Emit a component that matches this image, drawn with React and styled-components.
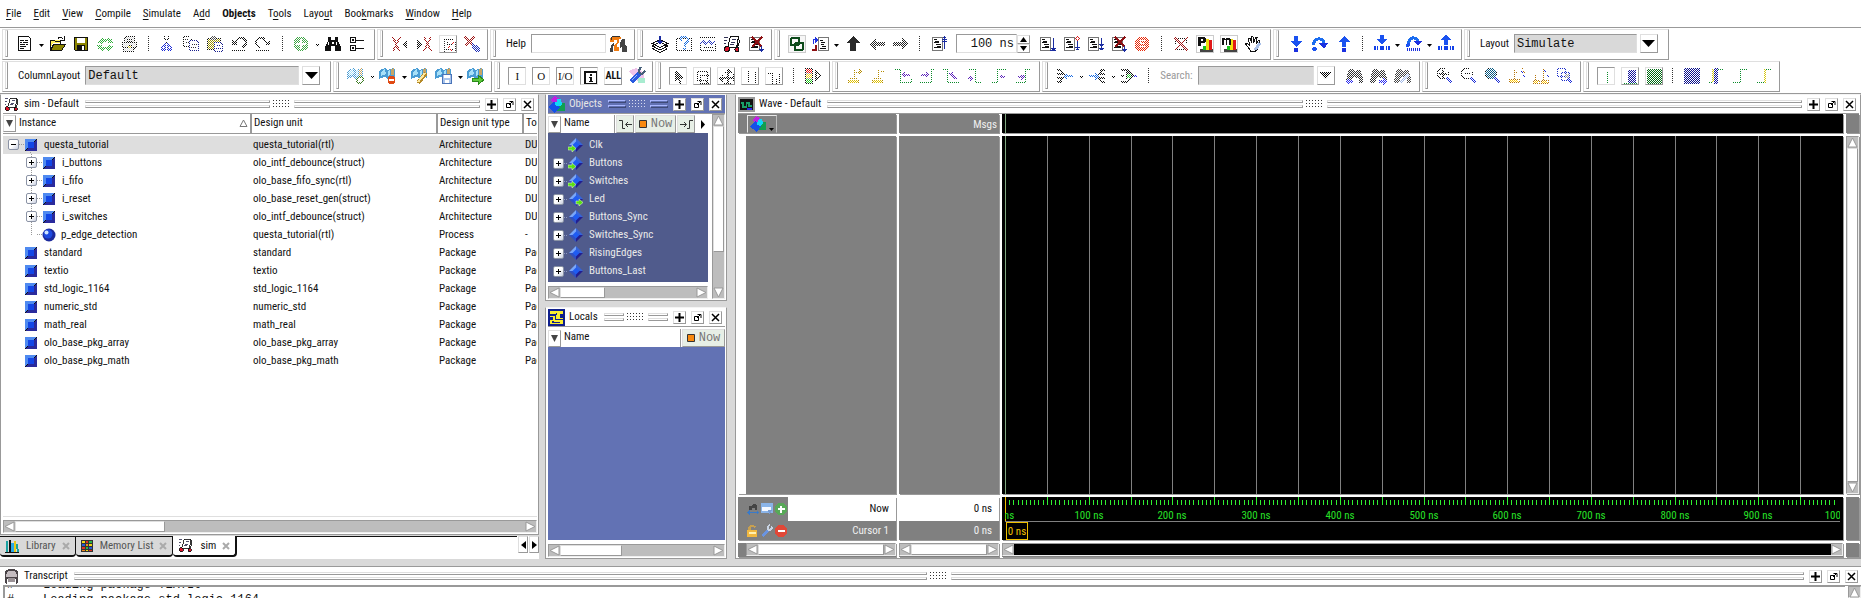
import React from "react";
import styled, { createGlobalStyle, css } from "styled-components";

const UI = `"Roboto Condensed", "Liberation Sans Narrow", "Liberation Sans", Arial, sans-serif`;
const MONO = `"Liberation Mono", "Courier New", monospace`;
const LIGHT = "#dfdfdf";
const DARK = "#999";
const FACE = "#d9d9d9";

const raised = css`
  border: 1px solid;
  border-color: ${LIGHT} ${DARK} ${DARK} ${LIGHT};
`;
const sunken = css`
  border: 1px solid;
  border-color: ${DARK} ${LIGHT} ${LIGHT} ${DARK};
`;
const dither = css`
  mask: conic-gradient(#000 25%, transparent 0 50%, #000 0 75%, transparent 0) 0 0 / 2px 2px;
`;

const Global = createGlobalStyle`
  *, *::before, *::after { box-sizing: border-box; }
  body { margin: 0; background: ${FACE}; }
  body, button, input, select, table {
    font-family: ${UI};
    font-size: 11px;
    line-height: 16px;
    color: #111;
  }
  button { padding: 0; margin: 0; background: none; border: 0; }
  svg { display: block; flex: none; }
`;

/* ---------- page frame ---------- */

const Page = styled.div`
  display: flex;
  flex-direction: column;
  height: 100vh;
  overflow: hidden;
  white-space: nowrap;
`;
const MenuBar = styled.nav`
  display: flex;
  align-items: center;
  height: 27px;
  background: #fff;
`;
const MenuItem = styled.button`
  padding: 0 6px;
  font-weight: ${(p) => (p.$active ? "bold" : "normal")};
  u { text-underline-offset: 2px; }
`;
const ToolArea = styled.div`
  display: flex;
  flex-direction: column;
  gap: 1px;
  padding: 1px 2px;
  background: #fff;
  border-top: 1px solid ${DARK};
  border-bottom: 1px solid ${DARK};
`;
const ToolRow = styled.div`
  display: flex;
  gap: 2px;
`;
const ToolGroup = styled.div`
  display: flex;
  align-items: center;
  height: 31px;
  padding: 0 ${(p) => p.$end ?? 3}px 2px 2px;
  ${raised}
`;
const Grip = styled.span`
  width: 3px;
  height: 27px;
  margin-right: 5px;
  ${raised}
`;
const ToolButton = styled.button`
  display: grid;
  place-items: center;
  width: 24px;
  height: 24px;
  flex: none;
  svg { ${(p) => p.$off && dither} }
`;
const BoxButton = styled(ToolButton)`
  width: 18px;
  height: 18px;
  margin: 0 3px;
  overflow: hidden;
  ${(p) => (p.$in ? sunken : raised)}
`;
const SerifGlyph = styled.span`
  font-family: "Liberation Serif", serif;
  font-size: 11px;
`;
const BoldGlyph = styled.span`
  font-weight: bold;
  font-size: 10px;
`;
const Drop = styled.button`
  display: grid;
  place-items: center;
  width: 8px;
  height: 24px;
  padding-top: 4px;
  svg { ${(p) => p.$off && dither} }
`;
const Split = styled.span`
  width: 14px;
  height: 16px;
  background: repeating-linear-gradient(#333 0 1px, transparent 1px 2px) center / 1px 100% no-repeat;
`;
const ToolLabel = styled.label`
  display: flex;
  align-items: center;
  gap: 5px;
  padding-left: 5px;
  color: ${(p) => (p.$off ? "#999" : "#111")};
`;
const Field = styled.input`
  width: ${(p) => p.$w}px;
  height: 19px;
  padding: 0 2px;
  background: ${(p) => (p.$fill ? FACE : "#fff")};
  border-radius: 0;
  outline: 0;
  font-family: ${MONO};
  font-size: 12px;
  text-align: ${(p) => (p.$right ? "right" : "left")};
  ${sunken}
`;
const Choice = styled.select`
  appearance: none;
  width: ${(p) => p.$w}px;
  height: 19px;
  padding: 0 2px;
  background: ${FACE};
  border-radius: 0;
  font-family: ${MONO};
  font-size: 12px;
  ${sunken}
`;
const ChoiceButton = styled.button`
  display: grid;
  place-items: center;
  width: 18px;
  height: 19px;
  margin: 0 7px 0 3px;
  ${raised}
  svg { ${(p) => p.$off && dither} }
`;
const Spin = styled.span`
  display: flex;
  flex-direction: column;
  width: 13px;
  margin-right: 5px;
  button {
    display: grid;
    place-items: center;
    height: 9px;
    ${raised}
  }
`;

/* ---------- panels ---------- */

const Main = styled.main`
  display: flex;
  flex: 1;
  min-height: 0;
  padding-bottom: 7px;
`;
const LeftColumn = styled.div`
  display: flex;
  flex-direction: column;
  width: 539px;
  margin-right: 6px;
`;
const MiddleColumn = styled.div`
  display: flex;
  flex-direction: column;
  gap: 6px;
  width: 182px;
  margin-right: 8px;
`;
const Panel = styled.section`
  display: flex;
  flex-direction: column;
  flex: ${(p) => p.$flex ?? "1"};
  min-width: 0;
  min-height: 0;
  padding: 0 1px 1px 2px;
  background: #fff;
  border: 1px solid ${DARK};
  border-top-color: #f4f4f4;
`;
const TitleBar = styled.header`
  display: flex;
  align-items: center;
  height: 19px;
  flex: none;
  padding-right: 3px;
  background: ${(p) => (p.$active ? "#6272b4" : "#fff")};
  color: ${(p) => (p.$active ? "#e6e6e6" : "#111")};
  border-bottom: 1px solid ${DARK};
`;
const TitleText = styled.h2`
  margin: 0 6px 0 4px;
  font-size: 11px;
  font-weight: normal;
`;
const Rails = styled.span`
  flex: 1;
  height: 8px;
  display: flex;
  flex-direction: column;
  gap: 2px;
  &::before, &::after {
    content: "";
    height: 3px;
    border: 1px solid;
    border-color: ${(p) => (p.$active ? "#a9b6ff" : LIGHT)} ${(p) => (p.$active ? "#3f4a78" : DARK)}
      ${(p) => (p.$active ? "#3f4a78" : DARK)} ${(p) => (p.$active ? "#a9b6ff" : LIGHT)};
  }
`;
const Dots = styled.span`
  width: 18px;
  height: 8px;
  margin: 0 3px;
  background: ${(p) => (p.$active ? "#d8dcf0" : "#333")};
  mask: conic-gradient(from 270deg at 1px 1px, #000 90deg, transparent 0) 0 0 / 3px 3px;
`;
const TitleButton = styled.button`
  display: grid;
  place-items: center;
  width: 13px;
  height: 13px;
  margin-left: 5px;
  background: #fff;
  ${raised}
`;

/* ---------- scroll bars ---------- */

const Track = styled.div`
  display: flex;
  flex-direction: ${(p) => (p.$vertical ? "column" : "row")};
  flex: none;
  ${(p) => (p.$vertical ? "width: 13px;" : "height: 13px;")}
  background: #bdbdbd;
  border: 1px solid;
  border-color: ${DARK} #eee #eee ${DARK};
`;
const Thumb = styled.span`
  flex: ${(p) => (p.$size ? `0 0 ${p.$size}px` : "1")};
  background: ${(p) => (p.$dark ? "#000" : "#fff")};
  ${(p) => !p.$dark && raised}
`;
const Fill = styled.span`
  flex: 1;
`;

const arrows = {
  left: "M10 1V10L1 5.5z",
  right: "M1 1V10L10 5.5z",
  up: "M1 10H10L5.5 1z",
  down: "M1 1H10L5.5 10z",
};
function ScrollArrow({ dir }) {
  return (
    <svg width="11" height="11" viewBox="0 0 11 11">
      <path d={arrows[dir]} fill="#fff" stroke="#999" />
    </svg>
  );
}
function ScrollBar({ vertical, thumb, dark }) {
  return (
    <Track $vertical={vertical}>
      <ScrollArrow dir={vertical ? "up" : "left"} />
      <Thumb $size={thumb} $dark={dark} />
      {thumb && <Fill />}
      <ScrollArrow dir={vertical ? "down" : "right"} />
    </Track>
  );
}

/* ---------- lists ---------- */

const ListFrame = styled.div`
  flex: 1;
  min-height: 0;
  overflow: hidden;
  margin-bottom: 3px;
  border-bottom: 1px solid ${LIGHT};
`;
const TreeTable = styled.table`
  table-layout: fixed;
  width: 100%;
  border-collapse: collapse;
  th {
    height: 19px;
    padding: 0 0 0 2px;
    font-weight: normal;
    text-align: left;
    overflow: hidden;
    border-right: 2px solid ${DARK};
    border-bottom: 1px solid ${DARK};
  }
  th:first-child { padding: 0; }
  th:last-child { border-right: 0; }
  td {
    height: 18px;
    padding: 0 0 0 2px;
    overflow: hidden;
  }
  td:first-child { padding: 0; }
  tbody::before { content: ""; display: block; height: 2px; }
`;
const TreeRow = styled.tr`
  background: ${(p) => (p.$selected ? "#dedede" : "transparent")};
`;
const HeadCell = styled.div`
  display: flex;
  align-items: center;
  justify-content: space-between;
  gap: 3px;
  padding-right: 2px;
`;
const HeadName = styled.span`
  flex: 1;
`;
const MarkButton = styled.button`
  display: grid;
  place-items: center;
  width: 13px;
  height: 17px;
  background: #fff;
  ${raised}
`;
const NodeLine = styled.div`
  display: flex;
  align-items: center;
  height: 18px;
  padding-left: ${(p) => p.$pad}px;
`;
const NodeName = styled.span`
  margin-left: ${(p) => p.$gap ?? 7}px;
`;
const vline = (h, y) => css`
  background: repeating-linear-gradient(#999 0 1px, transparent 1px 2px) 5px ${y} / 1px ${h} no-repeat;
`;
const Slot = styled.span`
  display: flex;
  align-items: center;
  width: 11px;
  height: 18px;
  ${(p) => p.$line === "full" && vline("18px", "0")}
  ${(p) => p.$line === "half" && vline("9px", "0")}
`;
const Link = styled.span`
  width: ${(p) => p.$w ?? 6}px;
  height: 1px;
  background: repeating-linear-gradient(90deg, ${(p) => p.$c ?? "#999"} 0 1px, transparent 1px 2px);
`;
const NodeIcon = styled.span`
  display: flex;
  align-items: center;
  height: 18px;
  ${(p) => p.$tail && vline("4px", "14px")}
`;
const Expander = styled.button`
  display: grid;
  place-items: center;
  width: 11px;
  height: 11px;
  border: 1px solid #8b93a5;
  border-radius: 2px;
  background: linear-gradient(135deg, #fff 50%, #c9cfe0);
`;

const ObjectsBody = styled.div`
  display: flex;
  flex: 1;
  min-height: 0;
  gap: 4px;
`;
const ObjectsList = styled.div`
  display: flex;
  flex-direction: column;
  flex: 1;
  min-width: 0;
`;
const ListHead = styled.div`
  display: flex;
  align-items: center;
  height: 19px;
  padding-top: ${(p) => p.$drop ?? 1}px;
  box-sizing: content-box;
  height: 18px;
  gap: 1px;
  background: #fff;
`;
const NameHead = styled.span`
  flex: 1;
  padding-left: 2px;
  border-right: 1px solid ${DARK};
  height: 18px;
`;
const NowHead = styled.button`
  display: flex;
  align-items: center;
  justify-content: center;
  gap: 4px;
  height: 18px;
  width: ${(p) => p.$w ?? 18}px;
  background: #e7efe6;
  color: #777;
  font-family: ${MONO};
  font-size: 12px;
  ${raised}
`;
const Signals = styled.ul`
  flex: 1;
  margin: 0 0 4px;
  padding: 3px 0 0 5px;
  list-style: none;
  overflow: hidden;
  background: ${(p) => (p.$plain ? "#6272b4" : "#505b8c")};
  color: #e9e9e9;
`;
const Signal = styled.li`
  display: flex;
  align-items: center;
  height: 18px;
`;

/* ---------- tabs ---------- */

const TabStrip = styled.div`
  display: flex;
  height: 23px;
  margin-top: 1px;
  background: #fff;
`;
const Tab = styled.button`
  display: flex;
  align-items: center;
  gap: 6px;
  height: 21px;
  padding: 0 5px 0 4px;
  background: ${(p) => (p.$on ? "#fff" : FACE)};
  color: ${(p) => (p.$on ? "#111" : "#555")};
  border: solid #111;
  border-width: ${(p) => (p.$on ? "0 2px 2px 0" : "1px 1px 2px 0")};
  border-radius: 0 0 4px 4px;
`;
const TabRest = styled.span`
  flex: 1;
  border-top: 1px solid #111;
`;
const TabStep = styled.button`
  display: grid;
  place-items: center;
  width: 10px;
  height: 17px;
  margin-left: 1px;
  ${raised}
`;

/* ---------- wave window ---------- */

const WaveGrid = styled.div`
  display: grid;
  flex: 1;
  min-height: 0;
  grid-template-columns: 158px 100px minmax(0, 1fr) 13px;
  grid-template-rows: 19px minmax(0, 1fr) 43px 14px;
  gap: 3px;
  & > * { box-shadow: 1px 1px 0 ${DARK}; min-width: 0; }
`;
const Gray = styled.div`
  display: flex;
  justify-content: ${(p) => (p.$end ? "flex-end" : "flex-start")};
  align-items: flex-end;
  padding: 0 2px 0 0;
  background: #808080;
  color: #f0f0f0;
`;
const NameArea = styled(Gray)`
  border-left: 8px solid #fff;
`;
const WaveMenu = styled.button`
  display: flex;
  align-items: flex-end;
  gap: 3px;
  width: 30px;
  height: 18px;
  padding-left: 2px;
  margin-left: 9px;
  border: 1px solid;
  border-color: #e8e8e8 #bbb #808080 #e8e8e8;
`;
const WaveMenuArrow = styled.span`
  padding-bottom: 1px;
`;
const Black = styled.div`
  background: #000;
  overflow: hidden;
  svg { width: 100%; height: 100%; }
`;
const Stack = styled.div`
  display: grid;
  grid-template-rows: 24px 19px;
  background: #808080;
`;
const Reading = styled.div`
  display: flex;
  align-items: center;
  background: ${(p) => (p.$now ? "#fff" : "#808080")};
  color: ${(p) => (p.$now ? "#111" : "#f0f0f0")};
`;
const ReadingIcons = styled.span`
  display: flex;
  align-items: center;
  align-self: stretch;
  width: 50px;
  padding-left: 8px;
  background: #808080;
`;
const ReadingText = styled.span`
  flex: 1;
  padding-right: 7px;
  text-align: right;
`;
const ScrollCell = styled.div`
  display: flex;
  padding-left: ${(p) => p.$indent ?? 0}px;
  background: #808080;
  & > * { flex: 1; }
`;

/* ---------- transcript ---------- */

const Transcript = styled.section`
  display: flex;
  flex-direction: column;
  height: 32px;
  flex: none;
  padding-left: 3px;
  background: #fff;
  border-top: 1px solid ${DARK};
`;
const TranscriptBody = styled.div`
  display: flex;
  flex: 1;
  min-height: 0;
  gap: 3px;
`;
const Log = styled.pre`
  display: flex;
  flex-direction: column;
  justify-content: flex-start;
  flex: 1;
  margin: 0;
  padding-left: 2px;
  overflow: hidden;
  border: solid ${DARK};
  border-width: 1px 0 0 2px;
  font-family: ${MONO};
  font-size: 12px;
  line-height: 15px;
  div { margin-top: -9px; }
`;

/* ---------- drawings ---------- */

const L = (d, s = "#111", f = "none", w = 1) => <path d={d} stroke={s} fill={f} strokeWidth={w} />;
const F = (d, f = "#111") => <path d={d} fill={f} />;

const page = (
  <>
    {L("M3.5 3.5H13.5V16.5H3.5z", "#777", "#fff")}
    {F("M5 5h3v1H5zM5 8h5v1H5zM7 10h5v1H7zM6 7h4v1H6zM5 13h7v1H5zM8 12h4v1H8z")}
  </>
);
const bars = <>{F("M2 12h2v4H2zM5 12h1v4H5zM8 12h4v4H8zM14 12h1v4h-1zM16 12h2v4h-2z", "#1240e8")}</>;
const flag = (
  <>
    {F("M1 5L4 3L7 2L9 4L12 3L16 2L17 4V12L14 11L10 13L7 11L3 12L1 13z", "#4a9cd4")}
    {F("M3 6L7 3L8 8L3 10zM10 5L12 4V9L10 10z", "#a8e0f8")}
    {F("M13 3L16 2V9H13z", "#c7a565")}
  </>
);
const sigTools = (d, arrow) => (
  <>
    {L(d, "#0a8a2a")}
    {F(arrow, "#5a22b8")}
  </>
);
const lens = (
  <>
    <circle cx="8" cy="7.5" r="5.5" fill="none" stroke="#111" />
    {L("M12 12L17 17", "#1a2cd8", "none", 2)}
  </>
);
const binocular = (c) => F("M5 3h4l2 3l3-2h2l3 8v5h-4v-5h-2l-3-2l-3 7H2l1-9z", c);

const art = {
  doc: <>{L("M3.500 2.500H13.500L15.500 4.500V16.500H3.500z", "#111", "#fff")}{F("M5 6h4v1H5zM10 6h3v1h-3zM5 8h2v1H5zM8 8h5v1H8zM5 10h5v1H5zM11 10h2v1h-2zM5 12h6v1H5zM5 14h4v1H5zM15 5h1v12h-1z")}</>,
  open: <>{F("M3 7h4l1-1h6v3H6L3 15z", "#ffef5a")}{L("M3.500 16.500V6.500H7.500L8.500 7.500H13.500V10", "#111")}{L("M3.500 16.500L6.500 10.500H18.500L14.500 16.500z", "#111", "#8b8400")}{L("M11 4.500Q14 1.500 16.500 5.500M17 2v4h-4", "#111")}</>,
  save: <>{L("M3.500 3.500H16.500V16.500H4.500L3.500 15.500z", "#111", "#8b8400")}{F("M6 4h8v5H6z", "#fff")}{F("M6 11h8v6H6z")}{F("M11 12h2v4h-2z", "#fff")}</>,
  refresh: F("M2 8L7 3L9 5L14 4L16 6V3L18 9L12 9L13 7L9 8L7 10zM18 12L13 17L11 15L7 17L4 15V18L2 11H8L7 13L11 13L13 11z", "#2fae3a"),
  print: <>{L("M5.500 8V3.500L8.500 2.500H15.500V8M3.500 8.500H17.500V13.500H3.500zM5 13.500L4 17.500H14L16 13.500", "#111", "#ddd")}{F("M7 5h6v1H7zM7 7h7v1H7zM10 11h4v1h-4z")}{F("M9 12h3v2H9z", "#d8c820")}</>,
  cut: <>{L("M7 2L11 12M12 2L8 12", "#111")}{L("M8 11L5 13V16H8zM11 11L14 13V16H11z", "#1c2bd6", "none", 2)}</>,
  copy: <>{L("M2.500 2.500H8.500L10.500 4.500V12.500H2.500z", "#111", "#fff")}{L("M8.500 6.500H15.500L17.500 8.500V16.500H8.500z", "#1a1f8c", "#fff")}{F("M4 5h4v1H4zM4 8h4v1H4zM10 10h6v1h-6zM10 13h6v1h-6z", "#333")}</>,
  paste: <>{L("M2.500 4.500H15.500V15.500H2.500z", "#111", "#9a9300")}{F("M6 2h5v4H6z", "#555")}{L("M9.500 8.500H15.500L17.500 10.500V17.500H9.500z", "#1a1f8c", "#fff")}{F("M11 11h5v1h-5zM11 14h5v1h-5z", "#1a1f8c")}</>,
  undo: <>{L("M6 9L10 4H14L17 7V10L13 14", "#111", "none", 2)}{F("M3 5v6h6zM3 16h14v1H3z")}</>,
  redo: <>{L("M14 9L10 4H6L3 7V10L7 14", "#111", "none", 2)}{F("M17 5v6h-6zM3 16h14v1H3z")}</>,
  add: <><circle cx="10" cy="10" r="7.500" fill="#3fa545" />{F("M9 5h2v4h4v2h-4v4H9v-4H5V9h4z", "#fff")}</>,
  find: <>{F("M5 3h3v3h4V3h3v4l3 6v4h-6v-5H8v5H2v-4l3-6z")}{F("M5 8h1v3H5zM13 8h1v3h-1zM9 8h2v2H9z", "#fff")}</>,
  tree: <>{L("M3.500 3.500h5v5h-5zM3.500 11.500h5v5h-5zM9 6.500h8M9 14.500h8", "#111")}{F("M5 5h2v2H5zM5 13h2v2H5z")}</>,
  xLeft: <>{L("M3 3L9 17M10 3L3 17", "#a01616", "none", 2)}{F("M17 5V15L12 10z")}</>,
  xRight: <>{F("M3 5V15L8 10z")}{L("M10 3L17 17M17 3L10 17", "#a01616", "none", 2)}</>,
  docRed: <>{L("M4.500 3.500H13.500L15.500 5.500V16.500H4.500z", "#333", "#fff")}{F("M6 6h3v1H6zM7 8h6v1H7zM6 13h7v1H6zM4 3h10v1H4z")}{F("M8 10h2v2H8zM12 6h2v2h-2zM10 13h2v2h-2z", "#e02020")}</>,
  xPen: <>{L("M3 3L13 13M12 3L3 12", "#a01616", "none", 2)}{F("M10 9l4 2l4 4v3h-3l-5-4z", "#1c2bb6")}</>,
  helpFind: <>{F("M3 3h10v2h-2v3l-2 2v3h2v4H6v-6l3-3V6H6v2H2V5z", "#f07c12")}{F("M14 5h3v6l2 2v5h-5v-5l-2 1V9zM3 11l3-2v3H5v6H2z", "#444")}{L("M3 5.500V3.500L5.500 2.500H12", "#333")}</>,
  layers: <>{L("M2.500 12L10 8L17.500 12L10 16zM2.500 14.500L10 18.500L17.500 14.500M2.500 9.500L10 5.500L17.500 9.500L10 13.500z", "#111", "#fff")}{F("M9 2h2v5h2l-3 4l-3-4h2z", "#1a2ca0")}</>,
  query: <>{F("M2 4h16v1H2zM2 16h16v1H2zM2 4h1v13H2zM17 4h1v13h-1z")}{L("M6.500 7V4.500L9 2.500H12L14 5V7L10.500 10V13", "#1a6fe0", "none", 2)}{F("M9 14h3v2H9z", "#1a6fe0")}</>,
  wavePts: <>{F("M2 3h16v1H2zM2 16h16v1H2zM2 9h1v8H2zM17 9h1v8h-1zM5 13h11v1H5z")}{L("M2 10L5 7L8 10L11 7L14 10L17 7", "#2a3bc0", "none", 2)}</>,
  cart: <>{L("M8.500 2.500H16.500L14.500 13.500H5.500L8.500 2.500z", "#111", "#fff")}{L("M2 3.500H6M2 6.500H5M2 9.500H4M10 5.500h4M9 8.500h4M8 10.500h4", "#335")}{L("M16.500 3L17.500 8L15 14", "#111")}<circle cx="5" cy="15" r="2.500" fill="#d8122a" stroke="#111" /><circle cx="15" cy="15.500" r="2" fill="#d8122a" stroke="#111" /></>,
  docX: <>{page}{L("M6 3L16 13M16 3L6 13", "#8c0f12", "none", 2)}{F("M15 12h1v3h2l-2 3h-1l-2-3h2z", "#1a2ca0")}</>,
  squares: <>{L("M1.500 1.500H18.500V18.500H1.500z", "#ccc", "#f6f6f6")}<rect x="4" y="4" width="8" height="7" rx="1" fill="none" stroke="#0c4a1a" strokeWidth="2" /><rect x="8" y="9" width="8" height="7" rx="1" fill="none" stroke="#0c4a1a" strokeWidth="2" /></>,
  restart: <>{L("M7.500 3.500H17.500V16.500H7.500z", "#777", "#fff")}{F("M9 6h3v1H9zM10 8h4v1h-4zM10 10h3v1h-3zM11 12h4v1h-4zM9 14h6v1H9z")}{F("M2 5h2V3l3 3l-3 3V6H3v4H2z", "#1f32e0")}{F("M1 15h3v-4h2v6H1z", "#8c0f12")}</>,
  up: F("M10 2L17 9H13V17H7V9H3z", "#2a2a2a"),
  back: F("M2 10L9 4V8H18V12H9V16z", "#222"),
  next: F("M18 10L11 4V8H2V12H11V16z", "#222"),
  runUp: <>{page}{F("M15 6h1v9h-1zM13 5h5v1h-5zM15 2h1v3h-1zM13 7h5v1h-5zM14 3h3v1h-3z", "#1a2ca0")}</>,
  runDown: <>{page}{F("M16 4h1v12h-1zM14 14h5v1h-5zM15 15h3v1h-3zM13 16h6v1h-6z", "#1a2ca0")}</>,
  runTo: <>{page}{F("M16 6h1v10h-1zM14 13h5v1h-5zM15 15h3v1h-3z", "#1a2ca0")}{L("M16.500 2.500L18.500 4.500L16.500 6.500L14.500 4.500z", "#d82020", "#fff")}</>,
  runAll: <>{page}{F("M16 4h1v12h-1zM14 10h5v1h-5zM15 11h3v1h-3zM14 14h5v1h-5zM15 15h3v1h-3z", "#1a2ca0")}</>,
  stop: <><circle cx="9" cy="10" r="7.500" fill="#e82808" />{L("M13 6H7V9H12M12 12H6", "#fff")}</>,
  noCover: <>{F("M4 4h12v1H4zM4 4h1v6H4zM15 4h1v5h-1zM5 15h12v1H5z")}{L("M4 4L17 17M17 3L4 16", "#a01616", "none", 2)}</>,
  prof: (c) => <>{L("M1.500 1.500H18.500V18.500H1.500z", "#ccc", "#fff")}{F("M5 15h13v3H5z", "#444")}{F("M14 6h3v10h-3z", "#e01818")}{F("M11 5h3v11h-3z", "#f2e010")}{F("M8 12h3v4H8z", "#1cc41c")}{c}</>,
  hand: <>{L("M6.500 15L2.500 10L4 9L6.500 11L5.500 4H7L8.500 9V2.500H10L10.500 9L12.500 3.500H14L13.500 9L16 6L17 7L14.500 15L12 17.500H8z", "#111", "#fff")}{L("M12 16L17 9", "#a9c0e8", "none", 3)}</>,
  stepIn: <>{F("M8 2h4v5h4l-6 6l-6-6h4z", "#1a52f0")}<circle cx="10" cy="16" r="2.300" fill="#1a30e0" /></>,
  stepOver: <>{L("M3 11Q5 4 10 5Q14 6 14 10", "#1a6cf0", "none", 3)}{F("M9 9H18L14 15z", "#1a30e0")}<circle cx="4.500" cy="15" r="2.300" fill="#1a52f0" /></>,
  stepOut: <>{F("M10 2L16 8H12V13H8V8H4z", "#1a52f0")}<circle cx="10" cy="16" r="2.300" fill="#1a30e0" /></>,
  stepIn2: <>{F("M8 1h4v4h4l-6 5l-6-5h4z", "#1a52f0")}{bars}</>,
  stepOver2: <>{L("M4 10Q6 3 10 4Q14 5 14 7", "#1a6cf0", "none", 3)}{F("M9 7H18L14 12z", "#1a30e0")}<circle cx="4" cy="11" r="2" fill="#1a52f0" />{F("M3 14h1v3H3zM5 14h1v3H5zM7 14h1v3H7zM9 14h1v3H9zM11 14h1v3h-1zM13 14h1v3h-1zM15 14h1v3h-1z", "#1a30e0")}</>,
  stepOut2: <>{F("M10 1L16 6H12V11H8V6H4z", "#1a52f0")}{bars}</>,
  flagAdd: <>{flag}<circle cx="14" cy="14" r="3" fill="#fff" stroke="#3a7a20" strokeWidth="2" /></>,
  flagDel: <>{flag}<circle cx="13.500" cy="14" r="4" fill="#e04a14" />{F("M11 13h5v2h-5z", "#fff")}</>,
  flagEdit: <>{flag}{L("M8 17L16 7", "#b58a28", "none", 4)}{L("M8 16L15 7", "#ffe9a0", "none", 2)}</>,
  flagSave: <>{flag}{L("M8.500 8.500H17.500V17.500H8.500z", "#4a74b8", "#a9c4ec")}{F("M10 9h6v3h-6zM11 14h4v3h-4z", "#fff")}</>,
  flagGo: <>{flag}{L("M6.500 12.500H12.500V9.500L18 14L12.500 18V15.500H6.500z", "#2a8a1a", "#5cc83a")}</>,
  info: <>{L("M4.500 4.500H15.500V15.500H4.500z", "#111", "#fff", 1)}{L("M3.500 3.500H16.500V16.500H3.500z")}{F("M9 6h2v2H9zM8 9h3v4h1v1H8v-1h1v-3H8z")}</>,
  wrench: <>{F("M2 5L9 2L14 4L17 8V15H10z", "#efc4ea")}{F("M11 12h7v5h-7z", "#a8ecd0")}{L("M4 16L12 8", "#2a5ce0", "none", 5)}{L("M5 14L10 9", "#9ab8ff", "none", 1)}{L("M12 7L15 8L18 5M12 7V4L14 1", "#47607a", "none", 2)}</>,
  pointer: F("M5 3h1l7 7v1h-3l2 5l-2 1l-2-6l-3 3z"),
  zoomArea: L("M3.500 3.500H13.500V12.500H3.500zM12 13L17 17M6.500 7.500H16.500V15.500H6.500z"),
  pan: <>{L("M10 1V19M1 10H19", "#111", "none", 2)}{L("M6.500 4.500L10 1.500L13.500 4.500zM6.500 15.500L10 18.500L13.500 15.500zM4.500 6.500L1.500 10L4.500 13.500zM15.500 6.500L18.500 10L15.500 13.500z")}</>,
  twoCur: L("M6.500 3V15M13.500 3V15M3 16.500H9M11 16.500H17"),
  edges: L("M2 5.500H6.500V16.500H10.500V10M13.500 16.500V5.500M15 9H17.500V16.500H13"),
  light: <>{L("M3.500 2.500H10.500V17.500H3.500z", "#111", "#999")}{F("M4 3h6v4H4z", "#f01010")}{F("M4 8h6v4H4z", "#f0d020")}{F("M4 13h6v4H4z", "#20d020")}{L("M14 5.500L18.500 10L14 14.500z", "#111", "none", 2)}</>,
  curAdd: <>{L("M9.500 3V13M4 12.500H13M3 16.500H13V14H3zM10 6.500H15", "#b58a00")}{F("M14 3l3 3l-3 4z", "#b58a00")}{F("M4 14h9v3H4z", "#e0c000")}</>,
  curDel: <>{L("M9.500 3V13M4 12.500H13M3 16.500H13V14H3zM11 5.500H15", "#b58a00")}{F("M4 14h9v3H4z", "#e0c000")}</>,
  e1: sigTools("M2 3.500H7.500V16.500H18V12", "M8 9L12 6v2h5v2h-5v2z"),
  e2: sigTools("M3 16.500H14.500V3.500H18", "M13 9L9 6v2H4v2h5v2z"),
  e3: sigTools("M2 3.500H6.500V16.500H18", "M7 8L12 6v3l5 3l-3 1l-4-2z"),
  e4: sigTools("M3 3.500H10.500V16.500H17", "M9 12L5 9v2H3v2h2v2z"),
  e5: sigTools("M3 16.500H8.500V3.500H17", "M10 11L13 8v2h3v2h-3v2z"),
  e6: sigTools("M3 16.500H12.500V3.500H17", "M12 10L8 8v2H5v2h3v2z"),
  expand: <>{L("M2 4H5L8 8H2M2 16H5L8 12H2", "#111", "none", 2)}{F("M8 10L12 6v3h6v2h-6v3z", "#1a6ae0")}</>,
  contract: <>{L("M18 4H15L12 8H18M18 16H15L12 12H18", "#111", "none", 2)}{F("M12 10L8 6v3H2v2h6v3z", "#1a6ae0")}</>,
  gate: <>{L("M2 4H8M2 10H5M2 16H8M8 4L14 10L8 16", "#111", "none", 2)}{F("M7 6L13 10L7 14z", "#111")}{F("M8 8h4v4H8z", "#2ac030")}{F("M15 9h3v2h-3z", "#2a2ae0")}</>,
  findPrev: <>{binocular("#333")}{F("M1 15l4-3v2h4v3H5v2z", "#2a2af0")}</>,
  findNext: <>{binocular("#333")}{F("M19 15l-4-3v2h-4v3h4v2z", "#2a2af0")}</>,
  findOpt: <>{binocular("#444")}{L("M8 17L16 9", "#9fb8e8", "none", 3)}</>,
  zoomIn: <>{lens}{F("M7 4h2v3h3v2H9v3H7V9H4V7h3z")}</>,
  zoomOut: <>{lens}{F("M5 7h6v1H5z")}</>,
  zoomFull: <>{lens}<circle cx="8" cy="7.500" r="5.500" fill="#0a5a82" /></>,
  zoomCur: <>{L("M7.500 3V13M7 6.500H11M2 13.500H12V16.500H2zM12 5L15 2L18 8", "#b5740c")}{F("M3 14h8v2H3z", "#ffc800")}{L("M14 5L18 11", "#1a2cd8")}</>,
  zoomTwo: <>{L("M4.500 8V14M12.500 3V14M2 14.500H8V17.500H2zM10 14.500H17V17.500H10z", "#b5740c")}{F("M3 15h4v2H3zM11 15h5v2h-5z", "#ffc800")}{L("M13 4L18 11", "#1a2cd8")}</>,
  zoomBox: <>{L("M2.500 2.500H10.500V10.500H2.500zM6.500 6.500H14.500V14.500H6.500z", "#1a2cc8")}<circle cx="12" cy="10" r="2.500" fill="#999" />{L("M13 13L17 17", "#1a2cd8", "none", 2)}</>,
  w1: L("M3 16.500H17M9.500 3V16", "#0a8a2a"),
  w2: <>{F("M6 2h8v16H6z", "#10109a")}{L("M2 15.500H18", "#0a8a2a")}</>,
  w3: F("M1 1h18v18H1z", "#006a12"),
  w4: F("M2 2h16v16H2z", "#0a0f8a"),
  w5: <>{F("M8 2h4v16H8z", "#10109a")}{L("M3 16.500H7M12 3.500H18", "#0a8a2a")}{L("M6.500 3V16", "#d8c810", "none", 2)}</>,
  w6: L("M3 16.500H10.500V3.500H17", "#0a8a2a"),
  w7: <>{L("M3 16.500H10M10 3.500H17", "#0a8a2a")}{L("M10.500 3V17", "#d8c810", "none", 2)}</>,
};
const letterP = F("M3 3h7v1h1v4h-1v1H6v3H3zM6 5v2h2V5z");
const letterM = F("M3 4h3v1h1V4h4v1h1v6h-2V6H8v5H7V6H5v5H3z");

function Icon({ draw, size = 20, label }) {
  return (
    <svg width={size} height={size} viewBox="0 0 20 20" shapeRendering="crispEdges" role="img" aria-label={label}>
      {draw}
    </svg>
  );
}
function Tool({ n, off, draw }) {
  return (
    <ToolButton type="button" $off={off} aria-label={n}>
      <Icon draw={draw ?? art[n]} />
    </ToolButton>
  );
}
function BoxTool({ n, off, pressed }) {
  return (
    <BoxButton type="button" $off={off} $in={pressed} aria-label={n}>
      <Icon draw={art[n]} size={20} />
    </BoxButton>
  );
}
function Tools({ names, off }) {
  return names.split(" ").map((n) => <Tool key={n} n={n} off={off} />);
}
function Caret() {
  return <svg width="5" height="3" viewBox="0 0 5 3"><path d="M0 0H5L2.5 3z" /></svg>;
}
function More({ off }) {
  return (
    <Drop type="button" $off={off} aria-label="more"><Caret /></Drop>
  );
}
function BigDown() {
  return <svg width="13" height="7" viewBox="0 0 13 7"><path d="M0 0H13L6.5 7z" /></svg>;
}
function Group({ children, end }) {
  return (
    <ToolGroup role="toolbar" $end={end}>
      <Grip />
      {children}
    </ToolGroup>
  );
}
function Mark() {
  return <svg width="7" height="7" viewBox="0 0 7 7"><path d="M0 0H7L3.5 7z" fill="#444" /></svg>;
}
function Title({ icon, text, active }) {
  return (
    <TitleBar $active={active}>
      <Icon draw={icon} size={17} />
      <TitleText>{text}</TitleText>
      <Rails $active={active} />
      <Dots $active={active} />
      <Rails $active={active} />
      <TitleButton type="button" aria-label="Zoom">
        <svg width="9" height="9" viewBox="0 0 9 9"><path d="M4.5 0V9M0 4.5H9" stroke="#000" strokeWidth="2" /></svg>
      </TitleButton>
      <TitleButton type="button" aria-label="Undock">
        <svg width="9" height="9" viewBox="0 0 9 9" fill="none" stroke="#000"><path d="M1.5 3.5h4v4h-4zM4 5L8 1M4.5 1.5h3.500v3.500" /></svg>
      </TitleButton>
      <TitleButton type="button" aria-label="Close">
        <svg width="9" height="9" viewBox="0 0 9 9"><path d="M1 1L8 8M8 1L1 8" stroke="#000" strokeWidth="1.5" /></svg>
      </TitleButton>
    </TitleBar>
  );
}
function Plus({ minus }) {
  return (
    <Expander type="button" aria-label={minus ? "Collapse" : "Expand"}>
      <svg width="7" height="7" viewBox="0 0 7 7" stroke="#000" shapeRendering="crispEdges">
        <path d={minus ? "M1 3.5H6" : "M1 3.5H6M3.5 1V6"} />
      </svg>
    </Expander>
  );
}
function Block() {
  return (
    <svg width="12" height="12" viewBox="0 0 12 12">
      <path d="M0 0H12L0 12z" fill="#4f8af0" />
      <path d="M12 0V12H0z" fill="#2a2a9c" />
      <path d="M12 0L9 3M0 12L3 9" stroke="#111" />
      <path d="M3 3h6v6H3z" fill="#1246e6" />
    </svg>
  );
}
function Ball() {
  return (
    <svg width="14" height="14" viewBox="0 0 14 14">
      <circle cx="7" cy="7" r="6.500" fill="#1c2a9c" />
      <circle cx="6" cy="6" r="4.500" fill="#1e4ae0" />
      <circle cx="4.500" cy="4.500" r="2" fill="#cfe4ff" />
    </svg>
  );
}
function Diamond({ port }) {
  return (
    <svg width="16" height="16" viewBox="0 0 16 16">
      <path d="M8 1V8H1z" fill="#79a6f8" />
      <path d="M8 1L15 8H8z" fill="#3563d8" />
      <path d="M1 8H8V15z" fill="#3050c0" />
      <path d="M15 8L8 15V8z" fill="#221f90" />
      <path d="M8 4.5L11.5 8L8 11.5L4.5 8z" fill="#1f5cf2" />
      {port === "in" && <path d="M0 10h4V8l4 3.500l-4 3.500v-2H0z" fill="#5ae010" stroke="#e8ffd8" strokeWidth=".5" />}
      {port === "out" && <path d="M8 10h3V8l4 3.500l-4 3.500v-2H8z" fill="#5ae010" stroke="#e8ffd8" strokeWidth=".5" />}
    </svg>
  );
}

const shapesIcon = (
  <>
    {F("M3 5L8 0L14 4L9 10z", "#c020e0")}
    {F("M11 8H20V18H11z", "#10a050")}
    {F("M7 6L14 13L8 20L0 13z", "#1450e8")}
    {F("M8 7h2l1-3h4l1 3v3l-2 2h-3l-2-1z", "#10d8f8")}
  </>
);
const localsIcon = (
  <>
    {F("M0 0h20v20H0z", "#10208c")}
    {F("M2 2h16v4h-4v5h4v7H2v-5h4V9H2z", "#f8ec30")}
    {L("M2 7H9V12H18M10 5V7M6 14V16H14", "#10208c", "none", 1.5)}
  </>
);
const waveIcon = (
  <>
    {L("M1 2H19V18H1z", "#999", "#111", 2)}
    {L("M3 8.500H6V13H10V8H13V12H17", "#19a068", "none", 2)}
    {L("M11 15H17", "#2a2ae0", "none", 2)}
  </>
);
const logIcon = (
  <>
    {F("M2 17V6Q3 1 10 1Q17 1 18 6V17L15 19V13H5V19z", "#4a4448")}
    {F("M4 7Q5 3 10 3Q15 3 16 7V11H4z", "#c4bcc0")}
    {F("M6 12h8v5H6z", "#9a9296")}
  </>
);
const libIcon = (
  <>
    {F("M2 4h3v13H2zM15 8h2l2 9h-3z", "#18a0a0")}
    {F("M6 2h3v15H6zM1 17h18v2H1z")}
    {F("M9 6h3v11H9z", "#28a8e8")}
    {F("M12 4h3v13h-3z", "#e8c818")}
    {F("M7 3h1v14H7z", "#e03050")}
  </>
);
const memIcon = (
  <>
    {F("M1 1h18v18H1z", "#333")}
    {F("M3 3h4v3H3zM13 7h4v3h-4zM8 15h4v2H8z", "#f0d818")}
    {F("M8 3h4v3H8zM3 11h4v3H3zM13 15h4v2h-4z", "#e03020")}
    {F("M13 3h4v3h-4zM8 11h4v3H8z", "#28b848")}
    {F("M3 7h4v3H3zM13 11h4v3h-4z", "#2858d8")}
    {F("M8 7h4v3H8zM3 15h4v2H3z", "#f08820")}
  </>
);

/* ---------- data ---------- */

const menus = [
  ["", "F", "ile"], ["", "E", "dit"], ["", "V", "iew"], ["", "C", "ompile"], ["", "S", "imulate"],
  ["A", "d", "d"], ["Objec", "t", "s"], ["T", "o", "ols"], ["Layo", "u", "t"], ["Boo", "k", "marks"],
  ["", "W", "indow"], ["", "H", "elp"],
];
const instances = [
  ["questa_tutorial", "questa_tutorial(rtl)", "Architecture", "DU Instance", "top"],
  ["i_buttons", "olo_intf_debounce(struct)", "Architecture", "DU Instance", "child"],
  ["i_fifo", "olo_base_fifo_sync(rtl)", "Architecture", "DU Instance", "child"],
  ["i_reset", "olo_base_reset_gen(struct)", "Architecture", "DU Instance", "child"],
  ["i_switches", "olo_intf_debounce(struct)", "Architecture", "DU Instance", "child"],
  ["p_edge_detection", "questa_tutorial(rtl)", "Process", "-", "process"],
  ...["standard", "textio", "std_logic_1164", "numeric_std", "math_real", "olo_base_pkg_array", "olo_base_pkg_math"]
    .map((n) => [n, n, "Package", "Package", "package"]),
];
const signals = [
  ["Clk", "in", false], ["Buttons", "in", true], ["Switches", "in", true], ["Led", "out", true],
  ["Buttons_Sync", null, true], ["Switches_Sync", null, true], ["RisingEdges", null, true], ["Buttons_Last", null, true],
];

function TreeNode({ name, kind }) {
  if (kind === "top")
    return (
      <NodeLine $pad={5}>
        <Slot><Plus minus /></Slot><Link />
        <NodeIcon $tail><Block /></NodeIcon><NodeName>{name}</NodeName>
      </NodeLine>
    );
  if (kind === "child")
    return (
      <NodeLine $pad={23}>
        <Slot $line="full"><Plus /></Slot><Link />
        <Block /><NodeName>{name}</NodeName>
      </NodeLine>
    );
  if (kind === "process")
    return (
      <NodeLine $pad={23}>
        <Slot $line="half" /><Link $w={5} />
        <Ball /><NodeName $gap={5}>{name}</NodeName>
      </NodeLine>
    );
  return (
    <NodeLine $pad={22}>
      <Block /><NodeName>{name}</NodeName>
    </NodeLine>
  );
}

/* Time axis: 100 ns every 83.7 px, origin 3 px from the left edge. */
const at = (ns) => 3 + Math.round(ns * 0.837);
const marks = (step) => Array.from({ length: Math.floor(1000 / step) }, (_, i) => (i + 1) * step);

function WaveCanvas({ cursorOnly }) {
  return (
    <svg shapeRendering="crispEdges">
      {!cursorOnly && marks(50).slice(0, -1).map((t) => (
        <rect key={t} x={at(t)} y="0" width="1" height="100%" fill="#808080" />
      ))}
      <rect x="3" y="0" width="1" height="100%" fill="#7fa67f" />
    </svg>
  );
}
function Ruler() {
  return (
    <svg>
      <g shapeRendering="crispEdges" fill="#30f030">
        {marks(5).slice(0, -2).map((t) => (
          <rect key={t} x={at(t)} y={t % 50 ? 3 : 0} width="1" height={t % 50 ? 5 : 8} />
        ))}
        <rect x="3" y="24" width="99.3%" height="1" fill="#808080" />
        <rect x="3" y="0" width="1" height="24" fill="#f0c000" />
      </g>
      <svg x="3" y="0" style={{ overflow: "hidden", width: "99.3%" }}>
        <g fill="#28e028" fontSize="11" textAnchor="middle">
          {[0, ...marks(100)].map((t) => (
            <text key={t} x={at(t) - 3} y="22">{t} ns</text>
          ))}
        </g>
      </svg>
      <rect x="4.500" y="25.500" width="21" height="17" fill="#000" stroke="#f0c000" />
      <text x="15" y="38" fill="#f0c000" fontSize="11" textAnchor="middle">0 ns</text>
    </svg>
  );
}
function CloseX() {
  return <svg width="8" height="8" viewBox="0 0 8 8"><path d="M1 1L7 7M7 1L1 7" stroke="#aaa" strokeWidth="2" /></svg>;
}
function NowLabel() {
  return (
    <>
      <svg width="8" height="8" viewBox="0 0 8 8"><path d="M.5.5h7v7h-7z" fill="#f88a10" stroke="#333" /></svg>
      Now
    </>
  );
}

export default function App() {
  return (
    <Page>
      <Global />
      <MenuBar>
        {menus.map(([a, k, b]) => (
          <MenuItem key={a + k + b} type="button" $active={a === "Objec"}>{a}<u>{k}</u>{b}</MenuItem>
        ))}
      </MenuBar>

      <ToolArea>
        <ToolRow>
          <Group end={5}>
            <Tool n="doc" /><More /><Tools names="open save" /><Tools names="refresh print" off />
            <Split /><Tools names="cut copy paste undo redo" off />
            <Split /><Tool n="add" off /><More off /><Tools names="find tree" />
          </Group>
          <Group><Tools names="xLeft xRight" off /><BoxTool n="docRed" off /><Tools names="xPen" off /></Group>
          <Group end={4}>
            <ToolLabel>Help<Field $w={75} aria-label="Help" /></ToolLabel>
            <Tool n="helpFind" />
          </Group>
          <Group><Tool n="layers" /><Tools names="query wavePts" off /><Tools names="cart docX" /></Group>
          <Group end={5}>
            <Tools names="squares restart" /><More /><Tool n="up" /><Tools names="back next" off />
            <Split /><Tool n="runUp" />
            <ToolLabel aria-label="Run length"><Field $w={61} $right defaultValue="100 ns" /></ToolLabel>
            <Spin>
              <button type="button" aria-label="More time"><svg width="7" height="5"><path d="M0 5H7L3.5 0z" /></svg></button>
              <button type="button" aria-label="Less time"><svg width="7" height="5"><path d="M0 0H7L3.5 5z" /></svg></button>
            </Spin>
            <Tools names="runDown runTo runAll docX" /><Tool n="stop" off />
            <Split /><Tool n="noCover" off />
            <Tool n="performance" draw={art.prof(letterP)} /><Tool n="memory" draw={art.prof(letterM)} /><Tool n="hand" />
          </Group>
          <Group>
            <Tools names="stepIn stepOver stepOut" /><Split />
            <Tool n="stepIn2" /><More /><Tool n="stepOver2" /><More /><Tool n="stepOut2" />
          </Group>
          <Group>
            <ToolLabel>Layout<Choice $w={123} defaultValue="Simulate"><option>Simulate</option></Choice></ToolLabel>
            <ChoiceButton type="button" aria-label="Open layouts"><BigDown /></ChoiceButton>
          </Group>
        </ToolRow>
        <ToolRow>
          <Group>
            <ToolLabel>ColumnLayout<Choice $w={214} defaultValue="Default"><option>Default</option></Choice></ToolLabel>
            <ChoiceButton type="button" aria-label="Open column layouts"><BigDown /></ChoiceButton>
          </Group>
          <Group>
            <Tool n="flagAdd" off /><More off /><Tool n="flagDel" /><More /><Tools names="flagEdit flagSave" /><More /><Tool n="flagGo" />
          </Group>
          <Group>
            <BoxButton type="button" $in><SerifGlyph>I</SerifGlyph></BoxButton>
            <BoxButton type="button" $in><SerifGlyph>O</SerifGlyph></BoxButton>
            <BoxButton type="button" $in><SerifGlyph>I/O</SerifGlyph></BoxButton>
            <BoxTool n="info" pressed />
            <BoxButton type="button"><BoldGlyph>ALL</BoldGlyph></BoxButton>
            <Tool n="wrench" />
          </Group>
          <Group end={5}>
            <BoxTool n="pointer" off pressed /><BoxTool n="zoomArea" off /><BoxTool n="pan" off /><BoxTool n="twoCur" off /><BoxTool n="edges" off />
            <Split /><Tool n="light" off />
          </Group>
          <Group end={4}><Tools names="curAdd curDel e1 e2 e3 e4 e5 e6" off /></Group>
          <Group end={5}>
            <Tool n="expand" off /><More off /><Tool n="contract" off /><More off /><Tool n="gate" off /><Split />
            <ToolLabel $off>Search:<Field $w={116} $fill /></ToolLabel>
            <ChoiceButton type="button" $off aria-label="Open searches"><BigDown /></ChoiceButton>
            <Tools names="findPrev findNext findOpt" off />
          </Group>
          <Group><Tools names="zoomIn zoomOut zoomFull zoomCur zoomTwo zoomBox" off /></Group>
          <Group>
            <BoxTool n="w1" off pressed /><BoxTool n="w2" off /><BoxTool n="w3" off /><Split />
            <Tools names="w4 w5 w6 w7" off />
          </Group>
        </ToolRow>
      </ToolArea>

      <Main>
        <LeftColumn>
          <Panel>
            <Title icon={art.cart} text="sim - Default" />
            <ListFrame>
              <TreeTable>
                <colgroup><col width="248" /><col width="186" /><col width="86" /><col /></colgroup>
                <thead>
                  <tr>
                    <th>
                      <HeadCell>
                        <MarkButton type="button" aria-label="Columns"><Mark /></MarkButton>
                        <HeadName>Instance</HeadName>
                        <svg width="9" height="8" viewBox="0 0 9 8"><path d="M1 7.5H8L4.5 1z" fill="#fff" stroke="#777" /></svg>
                      </HeadCell>
                    </th>
                    <th>Design unit</th><th>Design unit type</th><th>Top Category</th>
                  </tr>
                </thead>
                <tbody>
                  {instances.map(([name, unit, type, cat, kind]) => (
                    <TreeRow key={name} $selected={kind === "top"}>
                      <td><TreeNode name={name} kind={kind} /></td>
                      <td>{unit}</td><td>{type}</td><td>{cat}</td>
                    </TreeRow>
                  ))}
                </tbody>
              </TreeTable>
            </ListFrame>
            <ScrollBar thumb={150} />
          </Panel>
          <TabStrip>
            <Tab type="button"><Icon draw={libIcon} size={16} />Library<CloseX /></Tab>
            <Tab type="button"><Icon draw={memIcon} size={14} />Memory List<CloseX /></Tab>
            <Tab type="button" $on><Icon draw={art.cart} size={17} />sim<CloseX /></Tab>
            <TabRest />
            <TabStep type="button" aria-label="Previous tab"><svg width="5" height="8"><path d="M5 0V8L0 4z" /></svg></TabStep>
            <TabStep type="button" aria-label="Next tab"><svg width="5" height="8"><path d="M0 0V8L5 4z" /></svg></TabStep>
          </TabStrip>
        </LeftColumn>

        <MiddleColumn>
          <Panel $flex="0 0 207px">
            <Title icon={shapesIcon} text="Objects" active />
            <ObjectsBody>
              <ObjectsList>
                <ListHead>
                  <MarkButton type="button" aria-label="Columns"><Mark /></MarkButton>
                  <NameHead>Name</NameHead>
                  <NowHead type="button" aria-label="Previous event"><svg width="13" height="11" fill="none" stroke="#333"><path d="M0 1.5H3.5V9.5H6M13 5.5H7M9 3L6.5 5.5L9 8" /></svg></NowHead>
                  <NowHead type="button" $w={41}><NowLabel /></NowHead>
                  <NowHead type="button" aria-label="Next event"><svg width="13" height="11" fill="none" stroke="#333"><path d="M13 1.5H9.5V9.5H7M0 5.5H6M4 3L6.5 5.5L4 8" /></svg></NowHead>
                  <svg width="12" height="9"><path d="M5 0V9L9 4.5z" /></svg>
                </ListHead>
                <Signals>
                  {signals.map(([name, port, open]) => (
                    <Signal key={name}>
                      <Slot>{open && <Plus />}</Slot><Link $w={4} $c={open ? "#8f98c0" : "transparent"} />
                      <Diamond port={port} /><NodeName $gap={5}>{name}</NodeName>
                    </Signal>
                  ))}
                </Signals>
                <ScrollBar thumb={45} />
              </ObjectsList>
              <ScrollBar vertical thumb={126} />
            </ObjectsBody>
          </Panel>
          <Panel>
            <Title icon={localsIcon} text="Locals" />
            <ListHead $drop={2}>
              <MarkButton type="button" aria-label="Columns"><Mark /></MarkButton>
              <NameHead>Name</NameHead>
              <NowHead type="button" $w={43}><NowLabel /></NowHead>
            </ListHead>
            <Signals $plain />
            <ScrollBar thumb={62} />
          </Panel>
        </MiddleColumn>

        <Panel>
          <Title icon={waveIcon} text="Wave - Default" />
          <WaveGrid>
            <Gray>
              <WaveMenu type="button" aria-label="Add objects">
                <Icon draw={shapesIcon} size={16} />
                <WaveMenuArrow><Caret /></WaveMenuArrow>
              </WaveMenu>
            </Gray>
            <Gray $end>Msgs</Gray>
            <Black><WaveCanvas cursorOnly /></Black>
            <Gray />

            <NameArea />
            <Gray />
            <Black><WaveCanvas /></Black>
            <ScrollBar vertical />

            <Stack>
              <Reading $now>
                <ReadingIcons>
                  <Icon size={14} draw={<>{F("M5 6h3l2-3h3l3 3v5h-3v-2H8v2H4z", "#444")}{F("M1 15l4-3v2h10v-2l4 3l-4 3v-2H5v2z", "#3a7ac8")}</>} />
                  <Icon size={14} draw={<>{F("M1 2h17v14H1z", "#8ab4e8")}{F("M3 7h13v6H3z", "#f4f8ff")}{F("M11 12h6l-3 6z", "#789cd0")}</>} />
                  <Icon size={14} draw={<><circle cx="10" cy="10" r="9" fill="#58a858" />{F("M8 5h4v3h3v4h-3v3H8v-3H5V8h3z", "#fff")}</>} />
                </ReadingIcons>
                <ReadingText>Now</ReadingText>
              </Reading>
              <Reading>
                <ReadingIcons>
                  <Icon size={14} draw={<>{L("M5 9V5Q9 0 13 5", "#c8a050", "none", 3)}{F("M2 8h14v10H2z", "#f0b840")}{F("M4 12h10v2H4z", "#fff0b0")}</>} />
                  <Icon size={14} draw={<>{L("M4 17L11 9", "#6a94e0", "none", 4)}{L("M11 8L15 8L18 4M11 8V4L14 1", "#c8d4e4", "none", 3)}</>} />
                  <Icon size={14} draw={<><circle cx="10" cy="10" r="9" fill="#e04838" />{F("M5 8h10v4H5z", "#fff")}</>} />
                </ReadingIcons>
                <ReadingText>Cursor 1</ReadingText>
              </Reading>
            </Stack>
            <Stack>
              <Reading $now><ReadingText>0 ns</ReadingText></Reading>
              <Reading><ReadingText>0 ns</ReadingText></Reading>
            </Stack>
            <Black><Ruler /></Black>
            <Gray />

            <ScrollCell $indent={8}><ScrollBar /></ScrollCell>
            <ScrollCell><ScrollBar /></ScrollCell>
            <ScrollCell><ScrollBar dark /></ScrollCell>
            <Gray />
          </WaveGrid>
        </Panel>
      </Main>

      <Transcript>
        <Title icon={logIcon} text="Transcript" />
        <TranscriptBody>
          <Log><div>{"# -- Loading package TEXTIO\n# -- Loading package std_logic_1164"}</div></Log>
          <Track $vertical><ScrollArrow dir="up" /></Track>
        </TranscriptBody>
      </Transcript>
    </Page>
  );
}
